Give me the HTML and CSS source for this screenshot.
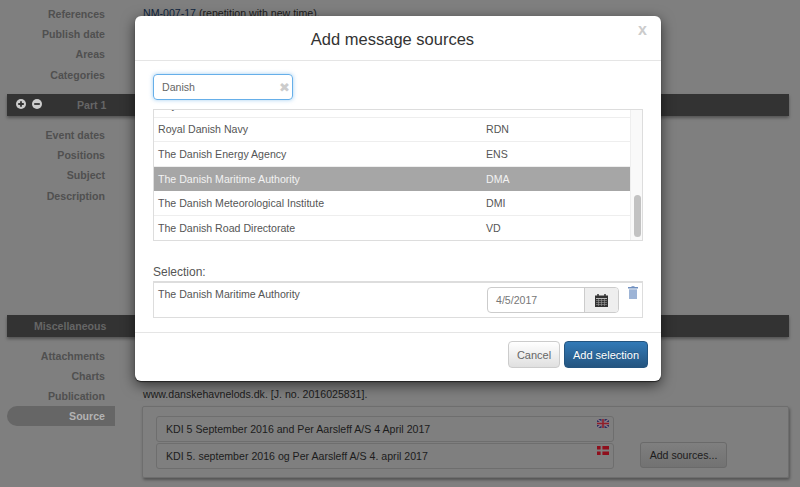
FILE: index.html
```html
<!DOCTYPE html>
<html lang="en">
<head>
<meta charset="utf-8">
<title>Add message sources</title>
<link rel="stylesheet" href="styles.css">
</head>
<body>
<main class="page">
  <section class="rows first">
    <div class="row"><div class="label">References</div><div class="val top"><a>NM-007-17</a> (repetition with new time).</div></div>
    <div class="row"><div class="label">Publish date</div></div>
    <div class="row"><div class="label">Areas</div></div>
    <div class="row"><div class="label">Categories</div></div>
  </section>
  <div class="bar">
    <span class="bar-icons">
      <svg width="10" height="10" viewBox="0 0 10 10"><circle cx="5" cy="5" r="5" fill="#ccc"/><path d="M2.2 5h5.6M5 2.2v5.6" stroke="#333" stroke-width="1.8"/></svg>
      <svg width="10" height="10" viewBox="0 0 10 10"><circle cx="5" cy="5" r="5" fill="#ccc"/><path d="M2.2 5h5.6" stroke="#333" stroke-width="1.8"/></svg>
    </span>
    <span class="bar-title part">Part 1</span>
  </div>
  <section class="rows tall">
    <div class="row"><div class="label">Event dates</div></div>
    <div class="row"><div class="label">Positions</div></div>
    <div class="row"><div class="label">Subject</div></div>
    <div class="row"><div class="label">Description</div></div>
  </section>
  <div class="bar misc"><span class="bar-title">Miscellaneous</span></div>
  <section class="rows">
    <div class="row"><div class="label">Attachments</div></div>
    <div class="row"><div class="label">Charts</div></div>
    <div class="row"><div class="label">Publication</div><div class="val pub">www.danskehavnelods.dk. [J. no. 2016025831].</div></div>
    <div class="row source-row">
      <div class="label active">Source</div>
      <div class="panel">
        <div class="fields">
          <div class="field">KDI 5 September 2016 and Per Aarsleff A/S 4 April 2017
            <svg class="flag" width="12" height="9" viewBox="0 0 12 9"><rect width="12" height="9" fill="#2a2f5e"/><path d="M0 0l12 9M12 0L0 9" stroke="#8a7a85" stroke-width="1.5"/><path d="M6 0v9M0 4.500h12" stroke="#8a7a85" stroke-width="3"/><path d="M6 0v9M0 4.500h12" stroke="#8f1f2a" stroke-width="1.600"/></svg>
          </div>
          <div class="field">KDI 5. september 2016 og Per Aarsleff A/S 4. april 2017
            <svg class="flag" width="12" height="9" viewBox="0 0 12 9"><rect width="12" height="9" fill="#8f0f1c"/><path d="M4.500 0v9M0 4.500h12" stroke="#7f7f7f" stroke-width="1.800"/></svg>
          </div>
        </div>
        <button class="btn-add-sources" type="button">Add sources...</button>
      </div>
    </div>
  </section>
</main>

<div class="modal">
  <header class="modal-head">
    <h1>Add message sources</h1>
    <span class="close">x</span>
  </header>
  <div class="modal-body">
    <div class="search">
      <span class="search-text">Danish</span>
      <span class="clear">✖</span>
    </div>
    <div class="list">
      <div class="list-rows">
        <div class="item"><span class="name">Royal Danish Administration</span><span class="code"></span></div>
        <div class="item"><span class="name">Royal Danish Navy</span><span class="code">RDN</span></div>
        <div class="item"><span class="name">The Danish Energy Agency</span><span class="code">ENS</span></div>
        <div class="item selected"><span class="name">The Danish Maritime Authority</span><span class="code">DMA</span></div>
        <div class="item"><span class="name">The Danish Meteorological Institute</span><span class="code">DMI</span></div>
        <div class="item"><span class="name">The Danish Road Directorate</span><span class="code">VD</span></div>
      </div>
      <div class="scroll"><div class="thumb"></div></div>
    </div>
    <div class="sel-label">Selection:</div>
    <div class="sel-box">
      <span class="sel-name">The Danish Maritime Authority</span>
      <div class="date">
        <span class="date-text">4/5/2017</span>
        <span class="date-btn">
          <svg width="13" height="13" viewBox="0 0 13 13"><path d="M0 1.500h13V13H0z" fill="#333"/><path d="M3 0v3M10 0v3" stroke="#333" stroke-width="1.500"/><path d="M1 4.500h11" stroke="#ddd" stroke-width=".8"/><path d="M1 6.500h11M1 8.500h11M1 10.500h11M3.500 5v7M6.500 5v7M9.500 5v7" stroke="#999" stroke-width=".6"/></svg>
        </span>
      </div>
      <svg class="trash" width="10" height="13" viewBox="0 0 10 13"><path d="M3.500 1V.3h3V1H10v1.500H0V1z" fill="#6f8fc0"/><path d="M1 3.300h8V13H1z" fill="#9db4d6"/></svg>
    </div>
  </div>
  <footer class="modal-foot">
    <button class="btn cancel" type="button">Cancel</button>
    <button class="btn primary" type="button">Add selection</button>
  </footer>
</div>
</body>
</html>
```

FILE: styles.css
```css
* { box-sizing: border-box; }
html, body { margin: 0; height: 100%; }
body {
  background: #7f7f7f;
  font-family: "Liberation Sans", Arial, sans-serif;
  font-size: 10.6px;
  color: #1c1c1c;
  overflow: hidden;
  position: relative;
}
.page { padding: 4px 11px 0 7px; }
.rows { display: flex; flex-direction: column; }
.tall { height: 199px; padding-top: 9px; }
.first { height: 90px; }
.row { display: flex; height: 20.2px; align-items: center; }
.label {
  width: 108px;
  padding-right: 10px;
  text-align: right;
  font-weight: bold;
  color: #505050;
  flex: none;
}
.val { margin-left: 28px; white-space: nowrap; }
.val a { color: #0e2540; text-decoration: underline; }
.top { position: relative; top: -1px; }
.pub { position: relative; top: -2px; }
.bar {
  height: 22px;
  background: #333;
  box-shadow: 0 2px 3px rgba(0,0,0,.35);
  display: flex;
  align-items: center;
  position: relative;
  color: #666;
  font-weight: bold;
}
.bar-icons { display: flex; gap: 6px; padding-left: 9px; align-items: center; height: 100%; padding-bottom: 2px; }
.bar-title { margin-left: 27px; }
.part { margin-left: 35px; }
.misc { margin-bottom: 8.5px; }
.source-row { height: auto; align-items: flex-start; }
.active {
  height: 20px;
  line-height: 20px;
  background: #666;
  color: #b3b3b3;
  border-radius: 10px 0 0 10px;
}
.panel {
  margin-left: 27px;
  width: 647px;
  height: 72px;
  border: 1px solid #6e6e6e;
  box-shadow: 1px 2px 3px rgba(0,0,0,.35);
  padding: 9px 13px 8px;
  display: flex;
  align-items: flex-end;
  border-radius: 2px;
  gap: 26px;
}
.fields { display: flex; flex-direction: column; gap: 1px; width: 458px; }
.field {
  height: 26px;
  line-height: 24px;
  border: 1px solid #6e6e6e;
  border-radius: 3px;
  padding-left: 9px;
  position: relative;
  white-space: nowrap;
}
.flag { position: absolute; top: 2px; right: 4px; }
.btn-add-sources {
  width: 87px;
  height: 26px;
  margin-bottom: 1px;
  font: 10.6px "Liberation Sans", Arial, sans-serif;
  color: #1c1c1c;
  background: linear-gradient(#7f7f7f, #727272);
  border: 1px solid #6a6a6a;
  border-radius: 3px;
  padding: 0;
}
.modal {
  position: absolute;
  left: 135px;
  top: 16px;
  width: 526px;
  height: 365px;
  background: #fff;
  border-radius: 6px;
  box-shadow: 0 1px 1px #222, 0 4px 14px rgba(0,0,0,.6);
  display: flex;
  flex-direction: column;
  color: #555;
}
.modal-head {
  height: 45px;
  border-bottom: 1px solid #e5e5e5;
  position: relative;
  text-align: center;
  padding-right: 11px;
}
.modal-head h1 {
  margin: 0;
  font-size: 16.5px;
  font-weight: normal;
  color: #333;
  line-height: 46px;
}
.close {
  position: absolute;
  top: 4px;
  right: 14px;
  font-size: 16px;
  font-weight: bold;
  color: #ccc;
  line-height: 20px;
}
.modal-body { flex: 1; padding: 13px 18px 0; }
.search {
  width: 140px;
  height: 26px;
  border: 1px solid #66afe9;
  border-radius: 4px;
  box-shadow: 0 0 4px rgba(102,175,233,.6);
  display: flex;
  align-items: center;
  justify-content: space-between;
  padding: 0 2px 0 8px;
  color: #666;
}
.clear { color: #ccc; font-size: 13px; line-height: 1; font-family: "DejaVu Sans", sans-serif; }
.list {
  margin-top: 9px;
  width: 490px;
  height: 132px;
  border: 1px solid #ddd;
  display: flex;
  overflow: hidden;
}
.list-rows { width: 476px; flex: none; margin-top: -17px; }
.item {
  display: flex;
  height: 24.6px;
  align-items: center;
  border-bottom: 1.5px solid #eee;
  padding-left: 4px;
  color: #555;
}
.name { width: 328px; flex: none; }
.selected { background: #a6a6a6; color: #f2f2f2; border-bottom-color: #a6a6a6; }
.scroll {
  flex: 1;
  background: #f9f9f9;
  border-left: 1px solid #eee;
  padding: 85px 3px 2px;
}
.thumb { width: 7px; height: 42px; border-radius: 4px; background: #c2c2c2; }
.sel-label { margin-top: 24px; font-size: 12px; line-height: 15px; color: #555; }
.sel-box {
  margin-top: 1px;
  width: 490px;
  height: 37px;
  border: 1px solid #ddd;
  border-top-width: 2px;
  position: relative;
  padding: 4px 4px;
  display: flex;
}
.sel-name { line-height: 14px; }
.date {
  position: absolute;
  left: 333px;
  top: 4px;
  width: 132px;
  height: 26px;
  border: 1px solid #ccc;
  border-radius: 4px;
  display: flex;
  align-items: center;
  color: #777;
}
.date-text { width: 96px; padding-left: 8px; }
.date-btn {
  flex: 1;
  height: 100%;
  background: #eee;
  border-left: 1px solid #ccc;
  border-radius: 0 3px 3px 0;
  display: flex;
  align-items: center;
  justify-content: center;
}
.trash { position: absolute; left: 474px; top: 3px; }
.modal-foot {
  margin-top: 14px;
  height: 49px;
  border-top: 1px solid #e5e5e5;
  display: flex;
  justify-content: flex-end;
  gap: 4px;
  padding: 8px 13px 0 0;
}
.btn {
  height: 27px;
  border-radius: 4px;
  font: 11px "Liberation Sans", Arial, sans-serif;
  padding: 0;
}
.cancel {
  width: 52px;
  color: #666;
  background: linear-gradient(#fff, #e0e0e0);
  border: 1px solid #ccc;
}
.primary {
  width: 84px;
  color: #fff;
  background: linear-gradient(#337ab7, #245580);
  border: 1px solid #245580;
  text-shadow: 0 -1px 0 rgba(0,0,0,.2);
}
```
